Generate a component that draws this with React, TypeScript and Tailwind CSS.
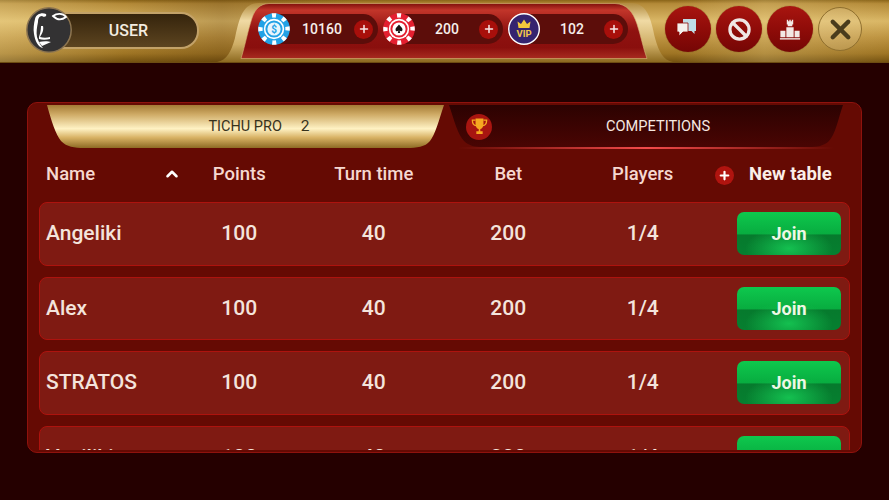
import { Ban, ChevronUp, Plus, X } from "lucide-react";

const rows = ["Angeliki", "Alex", "STRATOS", "Vasiliki"];
const cols = "grid grid-cols-[126px_134.5px_134.5px_134.5px_134.5px_1fr] items-center";

function Avatar() {
  return (
    <svg viewBox="0 0 46 46" className="h-[46px] w-[46px]">
      <circle cx="23" cy="23" r="22.2" fill="#333233" stroke="#8d7550" strokeWidth="1.5" />
      <path d="M9 12 C10 7 16 5 20 7 C21 9 19 11 16 9 C13 9 12 12 12 15 C11 20 10 25 11 30 C13 36 15 39 17 41 C12 40 9 34 8 27 C7 22 8 16 9 12Z" fill="#fff" />
      <path d="M27 9 C31 6 37 6 40 10 C36 13 31 13 27 9Z" fill="none" stroke="#fff" strokeWidth="1.8" />
      <path d="M17 19 C18 23 16 27 14 30 C17 31 21 31 24 30 L24 32 C20 33 16 33 13 32 L13 30 C14 27 15 23 15 19Z" fill="#fff" />
      <path d="M13 35 C17 34 22 34 25 35 C22 36 19 38 16 39 C15 38 14 36 13 35Z" fill="#fff" />
    </svg>
  );
}

function PokerChip({ main, center, kind }: { main: string; center: string; kind: "dollar" | "spade" }) {
  return (
    <svg viewBox="0 0 32 32" className="h-8 w-8 shrink-0">
      <circle cx="16" cy="16" r="15.8" fill={main} />
      <circle cx="16" cy="16" r="13.6" fill="none" stroke="#fff" strokeWidth="4.4" strokeDasharray="4 6.68" transform="rotate(-10 16 16)" />
      <circle cx="16" cy="16" r="10.2" fill="#fff" />
      <circle cx="16" cy="16" r="8.6" fill={main} />
      <circle cx="16" cy="16" r="6.6" fill={center} />
      {kind === "dollar" ? (
        <text x="16" y="19.6" textAnchor="middle" fontSize="10" fontWeight="700" fill={main} fontFamily="Roboto, sans-serif">$</text>
      ) : (
        <path d="M16 11.5 C17.5 13.5 19.8 15 19.5 17 C19.2 18.6 17.4 18.6 16.6 17.6 L17.2 20 L14.8 20 L15.4 17.6 C14.6 18.6 12.8 18.6 12.5 17 C12.2 15 14.5 13.5 16 11.5Z" fill="#1a1414" />
      )}
    </svg>
  );
}

function VipChip() {
  return (
    <svg viewBox="0 0 32 32" className="h-8 w-8 shrink-0">
      <circle cx="16" cy="16" r="15.3" fill="#35246f" stroke="#fff" strokeWidth="1.4" />
      <path d="M10.5 15 L9.5 8.5 L13 11 L16 6.5 L19 11 L22.5 8.5 L21.5 15Z" fill="#f4c83c" />
      <text x="16" y="24" textAnchor="middle" fontSize="9.5" fontWeight="700" fill="#f2c84a" fontFamily="Roboto, sans-serif">VIP</text>
    </svg>
  );
}

function Stat({ chip, value }: { chip: React.ReactNode; value: string }) {
  return (
    <div className="relative flex h-8 w-[120px] items-center">
      <div className="absolute inset-y-[1px] left-4 right-0 rounded-r-full bg-[#5c0d0a]" />
      <div className="relative z-10 flex w-full items-center">
        {chip}
        <span className="flex-1 text-center text-[14px] font-medium text-[#f6eeea]">{value}</span>
        <span className="mr-[5px] flex h-[19px] w-[19px] items-center justify-center rounded-full bg-[#a80f0b]">
          <Plus size={12} strokeWidth={3} className="text-[#f8e8e8]" />
        </span>
      </div>
    </div>
  );
}

function RoundBtn({ children }: { children: React.ReactNode }) {
  return (
    <button className="flex h-[46px] w-[46px] items-center justify-center rounded-full bg-[linear-gradient(#a81510,#8d0b08_55%,#750605)] shadow-[0_0_1px_#5a3a10]">
      {children}
    </button>
  );
}

function Row({ name }: { name: string }) {
  return (
    <div className={`${cols} h-[63.5px] shrink-0 rounded-[8px] border border-[#ad130e] bg-[#7f1a12] pl-[6px] pr-[8px] text-[21px] font-medium text-[#f4e4dc]`}>
      <span>{name}</span>
      <span className="text-center">100</span>
      <span className="text-center">40</span>
      <span className="text-center">200</span>
      <span className="text-center">1/4</span>
      <button className="ml-auto h-[43px] w-[104px] rounded-[7px] bg-[radial-gradient(ellipse_42%_50%_at_50%_85%,#14c050,transparent),linear-gradient(#0ec84d,#08ad40_50%,#067a2d_54%,#067f30)] text-[18px] font-bold text-[#eef8e6]">
        Join
      </button>
    </div>
  );
}

export default function App() {
  return (
    <div className="flex h-[500px] w-[889px] flex-col overflow-hidden bg-[#250000] font-[family-name:Roboto,sans-serif]">
      <header className="relative flex h-[63px] shrink-0 items-start border-b border-[#6d4c12] bg-[linear-gradient(90deg,rgba(255,235,170,0.28),transparent_14%,rgba(60,30,0,0.2)_25%,transparent_40%,transparent_76%,rgba(255,235,170,0.22)_86%,transparent),linear-gradient(#8a6418,#b48a38_6%,#dab766_34%,#be9441_60%,#9f7524_86%,#755210)]">
        <div className="flex w-[215px] shrink-0 items-center pl-[26px] pt-[12px]">
          <div className="relative flex items-center">
            <div className="ml-[30px] flex h-[37px] w-[143px] items-center justify-center rounded-r-[18px] border-2 border-[#c3a268] bg-[linear-gradient(#35240c,#5c4420)] pl-[2px] text-[16px] font-medium text-[#f3ece0]">
              USER
            </div>
            <div className="absolute left-0 top-[-5px]">
              <Avatar />
            </div>
          </div>
        </div>

        <div className="relative h-[62px] w-[460px] shrink-0">
          <svg viewBox="0 0 460 62" className="absolute inset-0 h-full w-full">
            <defs>
              <linearGradient id="band" x1="0" y1="0" x2="0" y2="1">
                <stop offset="0" stopColor="#b08a3e" />
                <stop offset="0.3" stopColor="#f0daa4" />
                <stop offset="0.7" stopColor="#cfae66" />
                <stop offset="1" stopColor="#8d6a20" />
              </linearGradient>
              <linearGradient id="redp" x1="0" y1="0" x2="0" y2="1">
                <stop offset="0" stopColor="#7f0f0b" />
                <stop offset="0.12" stopColor="#c2352a" />
                <stop offset="0.5" stopColor="#8f1210" />
                <stop offset="0.8" stopColor="#8a0f0d" />
                <stop offset="1" stopColor="#a82a20" />
              </linearGradient>
            </defs>
            <path d="M2 62 C12 60 16 52 20 38 C24 20 27 3 44 3 L416 3 C433 3 436 20 440 38 C444 52 448 60 458 62Z" fill="url(#band)" />
            <path d="M26 58.5 C30 46 33 30 37 18 C40 9 45 4 54 3.5 L400 3.5 C412 4 418 12 422 24 C426 36 428 48 432 58.5Z" fill="url(#redp)" stroke="#d9b779" strokeWidth="0.6" />
          </svg>
          <div className="absolute left-[43px] top-[13px] flex gap-[5px]">
            <Stat value="10160" chip={<PokerChip main="#22a2e6" center="#e8f5fc" kind="dollar" />} />
            <Stat value="200" chip={<PokerChip main="#e41f30" center="#ffffff" kind="spade" />} />
            <Stat value="102" chip={<VipChip />} />
          </div>
        </div>

        <div className="relative ml-[-10px] flex items-center gap-[5px] pt-[6px]">
          <RoundBtn>
            <svg viewBox="0 0 24 24" className="h-[24px] w-[24px]">
              <path d="M7 2 H20 V14 H18.5 V17 L15.5 14 H12 V6 H7Z" fill="#bfdde6" />
              <path d="M1 6 H12 V15 H7 L3 19 V15 H1Z" fill="#f4f0ec" stroke="#8d0b08" strokeWidth="0.8" />
            </svg>
          </RoundBtn>
          <RoundBtn>
            <Ban size={23} strokeWidth={3.4} className="text-[#efe6e4]" />
          </RoundBtn>
          <RoundBtn>
            <svg viewBox="0 0 24 24" className="h-[22px] w-[22px]">
              <path d="M8.5 2 H10 V3.5 H11.3 V2 H12.8 V3.5 H14 V2 H15.5 V7 H14.5 V9 H9.5 V7 H8.5Z" fill="#f2e8e4" />
              <path d="M8 10 H16 V21 H8Z M1.5 14 H7 V21 H1.5Z M17 14 H22.5 V21 H17Z" fill="#f2e8e4" />
              <path d="M1 22 H23 V23.5 H1Z" fill="#f2e8e4" />
            </svg>
          </RoundBtn>
          <button className="flex h-[44px] w-[44px] items-center justify-center rounded-full border border-[#8f6f2e] bg-[rgba(255,240,200,0.18)]">
            <X size={31} strokeWidth={3.4} className="text-[#4a3c1c]" />
          </button>
        </div>
      </header>

      <main className="ml-[27px] mt-[39px] flex h-[351px] w-[835px] flex-col overflow-hidden rounded-[10px] border border-[#8f120d] bg-[#650a03]">
        <div className="flex h-[46px] shrink-0 items-start pl-[19px] pt-[2px]">
          <div className="flex h-[43px] w-[397px] items-center justify-center gap-[19px] bg-[linear-gradient(#a47a34,#cfab66_22%,#fff2c4_55%,#d7b163_76%,#8d6a24)] pl-[27px] text-[14.5px] text-[#37321c] [clip-path:path('M0_0_L397_0_C392_15_388_30_383_36_C378_42_370_43_360_43_L37_43_C27_43_20_42_14_36_C9_30_4_15_0_0Z')]">
            <span>TICHU PRO</span>
            <span className="text-[15.5px]">2</span>
          </div>
          <div className="relative ml-[5px] flex h-[43px] w-[394px] items-center bg-[linear-gradient(#2c0201,#4a0503)] [clip-path:path('M0_0_L394_0_C389_15_386_30_380_36_C375_41_368_42_360_42_L34_42_C26_42_20_41_15_36_C9_30_5_15_0_0Z')]">
            <span className="ml-[17px] flex h-[26px] w-[26px] items-center justify-center rounded-full bg-[#a81510]">
              <svg viewBox="0 0 24 24" className="h-[19px] w-[19px]">
                <path d="M7 2 H17 V9 C17 13 14.5 15 13 15.2 V18 H16 V21.5 H8 V18 H11 V15.2 C9.5 15 7 13 7 9Z" fill="#f6a821" />
                <path d="M7 4 H3 C3 8 4.5 10.5 8 11 M17 4 H21 C21 8 19.5 10.5 16 11" fill="none" stroke="#f6a821" strokeWidth="1.7" />
              </svg>
            </span>
            <span className="absolute left-[157px] text-[14.6px] text-[#f6e8e0]">COMPETITIONS</span>
          </div>
        </div>
        <div className="relative h-0 shrink-0">
          <div className="absolute left-[430px] top-[-2px] h-[2px] w-[376px] bg-[linear-gradient(90deg,transparent,#f24b4b_50%,transparent)]" />
        </div>

        <div className={`${cols} h-[53px] shrink-0 pb-[1px] pl-[18px] text-[18.5px] text-[#f6d8d0]`}>
          <span className="relative font-medium">
            Name
            <ChevronUp size={18} strokeWidth={3.4} className="absolute right-[-9px] top-[4px] text-[#fff]" />
          </span>
          <span className="text-center font-medium">Points</span>
          <span className="text-center font-medium">Turn time</span>
          <span className="text-center font-medium">Bet</span>
          <span className="text-center font-medium">Players</span>
          <span className="flex items-center pl-[5px] text-[#fbeee8]">
            <span className="flex h-[19px] w-[19px] items-center justify-center rounded-full bg-[#b0140f]">
              <Plus size={13} strokeWidth={4} className="text-white" />
            </span>
            <span className="ml-[15px] whitespace-nowrap font-bold">New table</span>
          </span>
        </div>

        <div className="mx-[11px] mb-[2px] flex min-h-0 flex-1 flex-col gap-[11px] overflow-hidden">
          {rows.map((r) => (
            <Row key={r} name={r} />
          ))}
        </div>
      </main>
    </div>
  );
}
